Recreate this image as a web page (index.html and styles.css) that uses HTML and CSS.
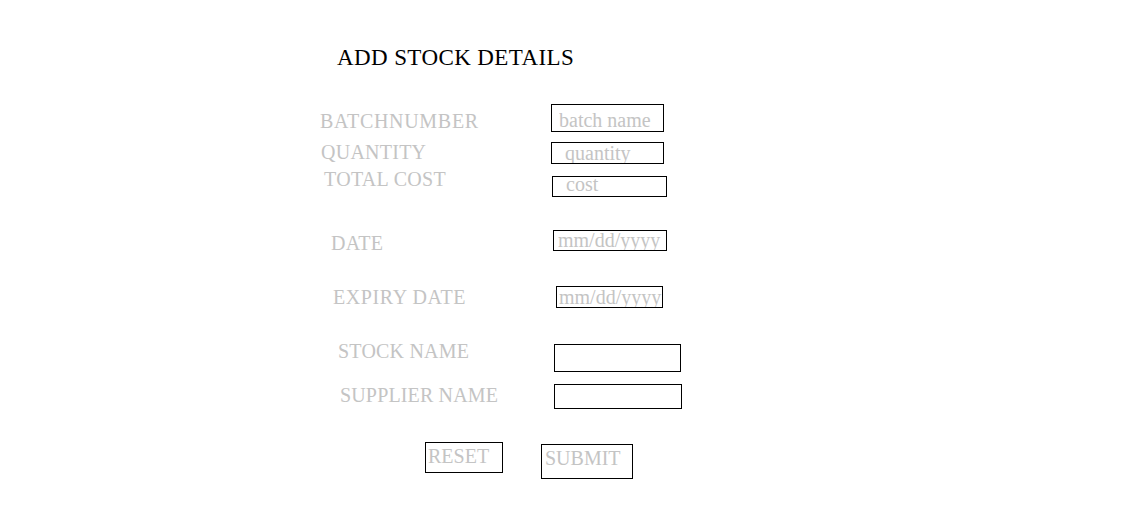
FILE: index.html
```html
<!DOCTYPE html>
<html>
<head>
<meta charset="utf-8">
<title>Add Stock Details</title>
<link rel="stylesheet" href="styles.css">
</head>
<body>
<form class="stock-form">
  <h1 class="title">ADD STOCK DETAILS</h1>

  <div class="row row-batch">
    <label class="label">BATCHNUMBER</label>
    <input class="field" type="text" placeholder="batch name">
  </div>
  <div class="row row-qty">
    <label class="label">QUANTITY</label>
    <input class="field" type="text" placeholder="quantity">
  </div>
  <div class="row row-cost">
    <label class="label">TOTAL COST</label>
    <input class="field" type="text" placeholder="cost">
  </div>
  <div class="row row-date">
    <label class="label">DATE</label>
    <input class="field" type="text" placeholder="mm/dd/yyyy">
  </div>
  <div class="row row-expiry">
    <label class="label">EXPIRY DATE</label>
    <input class="field" type="text" placeholder="mm/dd/yyyy">
  </div>
  <div class="row row-stock">
    <label class="label">STOCK NAME</label>
    <input class="field" type="text">
  </div>
  <div class="row row-supplier">
    <label class="label">SUPPLIER NAME</label>
    <input class="field" type="text">
  </div>

  <div class="actions">
    <button class="btn btn-reset" type="reset">RESET</button>
    <button class="btn btn-submit" type="button">SUBMIT</button>
  </div>
</form>
</body>
</html>
```

FILE: styles.css
```css
html, body {
  margin: 0;
  padding: 0;
  background: #ffffff;
}

body {
  font-family: "Liberation Serif", "Times New Roman", serif;
  width: 1123px;
  height: 521px;
  overflow: hidden;
}

.stock-form {
  display: flex;
  flex-direction: column;
  padding-top: 46px;
}

.title {
  margin: 0 0 0 337px;
  font-size: 23px;
  line-height: 23px;
  letter-spacing: 0.4px;
  font-weight: normal;
  color: #000000;
}

.row {
  display: flex;
  align-items: flex-start;
}

.label {
  font-size: 20px;
  line-height: 20px;
  color: #c4c4c4;
  white-space: nowrap;
}

.field {
  box-sizing: border-box;
  margin: 0;
  border: 1px solid #000000;
  border-radius: 0;
  background: #ffffff;
  font-family: "Liberation Serif", "Times New Roman", serif;
  font-size: 20px;
  color: #808080;
  padding: 0;
  outline: none;
}

.field::placeholder {
  color: #c4c4c4;
  opacity: 1;
}

/* Row 1 */
.row-batch { margin-top: 35px; padding-left: 320px; }
.row-batch .label { flex: 0 0 231px; margin-top: 7px; letter-spacing: 0.7px; }
.row-batch .field { width: 113px; height: 28px; padding: 4px 0 0 7px; }

/* Row 2 */
.row-qty { margin-top: 10px; padding-left: 321px; }
.row-qty .label { flex: 0 0 230px; margin-top: 0; letter-spacing: 0.25px; }
.row-qty .field { width: 113px; height: 22px; padding-left: 13px; }

/* Row 3 */
.row-cost { margin-top: 4px; padding-left: 324px; }
.row-cost .label { flex: 0 0 228px; margin-top: 1px; letter-spacing: 0.3px; }
.row-cost .field { width: 115px; height: 21px; margin-top: 8px; padding: 0 0 4px 13px; }

/* Row 4 (row height 23: label 3 + 20) */
.row-date { margin-top: 33px; padding-left: 331px; }
.row-date .label { flex: 0 0 222px; margin-top: 3px; letter-spacing: 0.3px; }
.row-date .field { width: 114px; height: 21px; padding-left: 4px; }

/* Row 5 */
.row-expiry { margin-top: 33px; padding-left: 333px; }
.row-expiry .label { flex: 0 0 223px; margin-top: 1px; letter-spacing: 0.6px; }
.row-expiry .field { width: 107px; height: 22px; padding-left: 2px; }

/* Row 6 */
.row-stock { margin-top: 32px; padding-left: 338px; }
.row-stock .label { flex: 0 0 216px; margin-top: 1px; letter-spacing: 0.2px; }
.row-stock .field { width: 127px; height: 28px; margin-top: 4px; }

/* Row 7 */
.row-supplier { margin-top: 12px; padding-left: 340px; }
.row-supplier .label { flex: 0 0 214px; margin-top: 1px; letter-spacing: 0.15px; }
.row-supplier .field { width: 128px; height: 25px; }

.actions {
  display: flex;
  align-items: flex-start;
  gap: 38px;
  margin-top: 33px;
  padding-left: 425px;
}

.btn {
  box-sizing: border-box;
  margin: 0;
  border: 1px solid #000000;
  border-radius: 0;
  background: #ffffff;
  font-family: "Liberation Serif", "Times New Roman", serif;
  font-size: 20px;
  line-height: 20px;
  color: #c4c4c4;
  text-align: left;
  cursor: pointer;
}

.btn-reset {
  width: 78px;
  height: 31px;
  padding: 0 0 4px 2px;
}

.btn-submit {
  width: 92px;
  height: 35px;
  margin-top: 2px;
  padding: 0 0 7px 3px;
}
```
